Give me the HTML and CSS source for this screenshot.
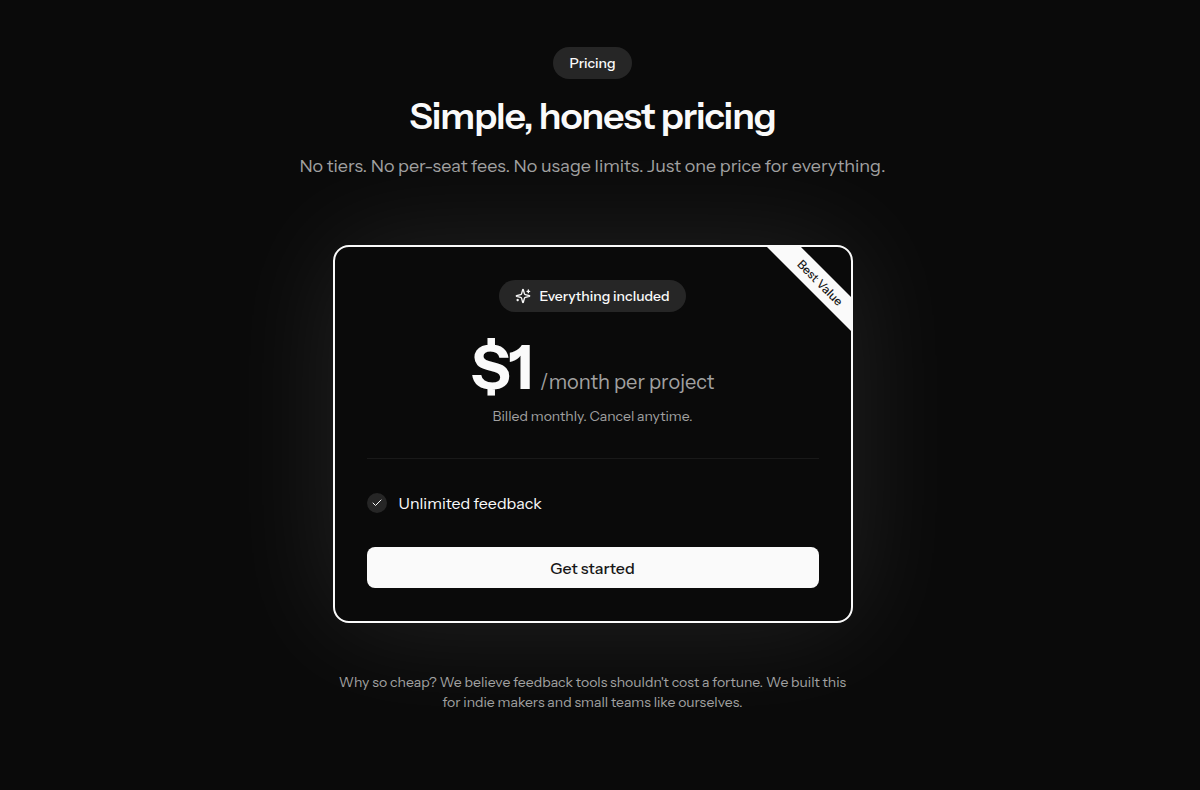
FILE: index.html
```html
<!DOCTYPE html>
<html lang="en">
<head>
    <meta charset="UTF-8">
    <meta name="viewport" content="width=device-width, initial-scale=1.0">
    <title>Pricing</title>
    <link rel="stylesheet" href="styles.css">
</head>
<body>

<section class="pricing">
    <!-- Heading -->
    <header class="intro">
        <span class="badge">Pricing</span>
        <h1>Simple, honest pricing</h1>
        <p class="subtitle">No tiers. No per-seat fees. No usage limits. Just one price for everything.</p>
    </header>

    <!-- Plan card -->
    <div class="card">
        <div class="ribbon-wrap"><div class="ribbon">Best Value</div></div>

        <span class="badge">
            <svg class="sparkles" viewBox="0 0 24 24" aria-hidden="true">
                <path d="M9.94 15.5A2 2 0 0 0 8.5 14.06l-6.14-1.58a.5.5 0 0 1 0-.96L8.5 9.94A2 2 0 0 0 9.94 8.5l1.58-6.14a.5.5 0 0 1 .96 0l1.58 6.14a2 2 0 0 0 1.44 1.44l6.14 1.58a.5.5 0 0 1 0 .96l-6.14 1.58a2 2 0 0 0-1.44 1.44l-1.58 6.14a.5.5 0 0 1-.96 0z"/>
                <path d="M20 3v4M22 5h-4M4 17v2M5 18H3"/>
            </svg>
            Everything included
        </span>

        <div class="price">
            <span class="amount">$1</span>
            <span class="period">/month per project</span>
        </div>
        <p class="billing">Billed monthly. Cancel anytime.</p>

        <ul class="features">
            <li>
                <span class="check">
                    <svg viewBox="0 0 24 24" aria-hidden="true"><path d="M20 6 9 17l-5-5"/></svg>
                </span>
                Unlimited feedback
            </li>
        </ul>

        <button type="button" class="cta">Get started</button>
    </div>

    <p class="note">Why so cheap? We believe feedback tools shouldn't cost a fortune. We built this for indie makers and small teams like ourselves.</p>
</section>

</body>
</html>
```
FILE: styles.css
```css
body {
    margin: 0;
    padding-right: 15px;
    min-height: 100vh;
    box-sizing: border-box;
    background-color: #0a0a0a;
    color: #fafafa;
    font-family: "Instrument Sans", Inter, "Liberation Sans", sans-serif;
}
h1, p, ul {
    margin: 0;
}
.pricing {
    display: flex;
    flex-direction: column;
    align-items: center;
    padding: 47px 16px;
    text-align: center;
}
.intro {
    display: flex;
    flex-direction: column;
    align-items: center;
}
.badge {
    display: inline-flex;
    align-items: center;
    gap: 8px;
    height: 32px;
    padding: 0 16px;
    border-radius: 16px;
    background-color: #262626;
    font-size: 14px;
    font-weight: 500;
}
h1 {
    margin-top: 17px;
    font-size: 37px;
    line-height: 40px;
    font-weight: 600;
    letter-spacing: -1px;
}
.subtitle {
    margin-top: 16px;
    color: #a1a1a1;
    font-size: 18px;
    line-height: 28px;
}
.card {
    position: relative;
    display: flex;
    flex-direction: column;
    align-items: center;
    box-sizing: border-box;
    width: 100%;
    max-width: 520px;
    margin-top: 65px;
    padding: 33px 32px;
    border: 2px solid #fafafa;
    border-radius: 16px;
    background-color: #0a0a0a;
    box-shadow: 0 0 120px rgba(255, 255, 255, 0.1);
}
.ribbon-wrap {
    position: absolute;
    inset: 0;
    overflow: hidden;
    border-radius: 14px;
    pointer-events: none;
}
.ribbon {
    position: absolute;
    top: 24px;
    right: -39px;
    width: 140px;
    background-color: #fafafa;
    color: #171717;
    font-size: 12px;
    line-height: 24px;
    font-weight: 500;
    transform: rotate(45deg);
}
.sparkles {
    width: 16px;
    height: 16px;
    fill: none;
    stroke: currentColor;
    stroke-width: 2;
    stroke-linecap: round;
    stroke-linejoin: round;
}
.price {
    display: flex;
    align-items: baseline;
    gap: 8px;
    margin-top: 23px;
}
.amount {
    font-size: 61px;
    line-height: 64px;
    font-weight: 700;
    letter-spacing: -1px;
}
.period {
    color: #a1a1a1;
    font-size: 20px;
}
.billing {
    margin-top: 7px;
    color: #a1a1a1;
    font-size: 14px;
    line-height: 20px;
}
.features {
    width: 100%;
    box-sizing: border-box;
    margin-top: 32px;
    padding: 32px 0;
    border-top: 1px solid #191919;
    list-style: none;
}
.features li {
    display: flex;
    align-items: center;
    gap: 12px;
    font-size: 16px;
    line-height: 24px;
}
.check {
    display: flex;
    align-items: center;
    justify-content: center;
    width: 20px;
    height: 20px;
    border-radius: 50%;
    background-color: #262626;
}
.check svg {
    width: 12px;
    height: 12px;
    fill: none;
    stroke: currentColor;
    stroke-width: 2;
    stroke-linecap: round;
    stroke-linejoin: round;
}
.cta {
    width: 100%;
    height: 41px;
    border: none;
    border-radius: 8px;
    background-color: #fafafa;
    color: #171717;
    font-family: inherit;
    font-size: 16px;
    font-weight: 500;
    cursor: pointer;
}
.cta:hover {
    background-color: #e5e5e5;
}
.note {
    max-width: 520px;
    margin-top: 49px;
    color: #a1a1a1;
    font-size: 14px;
    line-height: 20px;
}
```
